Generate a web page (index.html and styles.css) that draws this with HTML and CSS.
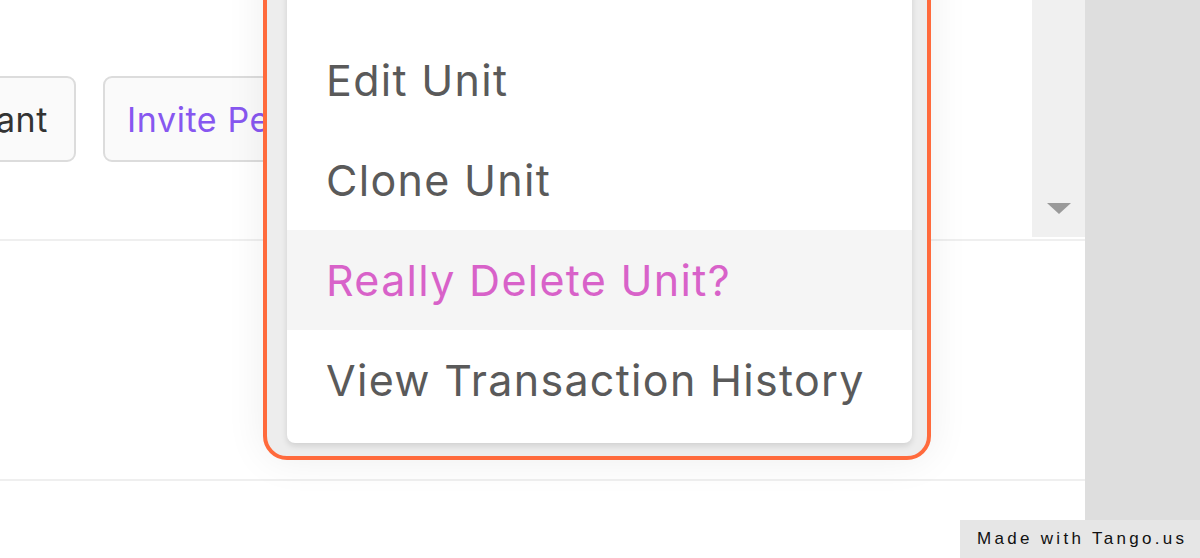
FILE: index.html
```html
<!DOCTYPE html>
<html>
<head>
<meta charset="utf-8">
<link rel="stylesheet" href="styles.css">
</head>
<body>
<div class="screen">
  <div class="page">
    <div class="toolbar">
      <div class="buttons">
        <button class="btn btn-left">Add Tenant</button>
        <button class="btn btn-invite">Invite People</button>
      </div>
      <div class="gutter"><span class="tri"></span></div>
    </div>
    <div class="row"></div>
    <div class="row row-last"></div>

    <div class="focus">
      <ul class="menu">
        <li class="item">Edit Unit</li>
        <li class="item">Clone Unit</li>
        <li class="item item-danger">Really Delete Unit?</li>
        <li class="item">View Transaction History</li>
      </ul>
    </div>
  </div>
  <div class="side"></div>
  <div class="tango">Made with Tango.us</div>
</div>
</body>
</html>
```
FILE: styles.css
```css
* { box-sizing: border-box; }
html, body { margin: 0; padding: 0; }
body { width: 1200px; height: 558px; overflow: hidden; background: #fff; font-family: Inter, "Noto Sans", sans-serif; }

.screen { position: relative; display: flex; width: 1200px; height: 558px; overflow: hidden; }
.page { position: relative; width: 1085px; height: 558px; background: #fff; display: flex; flex-direction: column; overflow: hidden; }
.side { width: 115px; height: 558px; background: #dedede; }

.toolbar { display: flex; height: 241px; flex-shrink: 0; border-bottom: 2px solid #efefef; }
.buttons { flex: 1; display: flex; gap: 27px; padding-top: 76px; margin-left: -184px; overflow: hidden; }
.btn {
  height: 86px; padding: 0 25px; border: 2px solid #dcdcdc; border-radius: 9px;
  background: #fafafa; font-family: Inter, sans-serif; font-size: 34px; white-space: nowrap;
  color: #333; letter-spacing: 0.6px; flex-shrink: 0;
}
.btn-left { width: 260px; text-align: right; padding-right: 26px; }
.btn-invite { color: #8757f0; padding-left: 22px; }
.gutter { width: 53px; height: 237px; background: #f0f0f0; display: flex; justify-content: center; padding-top: 203px; flex-shrink: 0; }
.tri { width: 0; height: 0; border-left: 12px solid transparent; border-right: 12px solid transparent; border-top: 11px solid #9a9a9a; }

.row { height: 240px; flex-shrink: 0; border-bottom: 2px solid #efefef; }
.row-last { flex: 1; height: auto; border-bottom: none; }

.focus {
  position: absolute; left: 263px; top: -60px; width: 668px; height: 520px;
  border: 4px solid #ff6a3c; border-radius: 24px;
  padding: 0 15px 13px 20px;
  background: #ededed;
  box-shadow: 0 0 40px rgba(0,0,0,0.07);
  display: flex; flex-direction: column; justify-content: flex-end;
}
.menu {
  list-style: none; margin: 0; padding: 0 0 13px 0;
  background: #fff; border-radius: 0 0 8px 8px;
  box-shadow: 0 3px 6px rgba(0,0,0,0.12);
  height: 503px; display: flex; flex-direction: column; justify-content: flex-end;
}
.item {
  height: 100px; display: flex; align-items: center; padding-left: 39px;
  font-size: 43px; color: #5a5a5a; letter-spacing: 1.3px;
}
.item-danger { background: #f5f5f5; color: #d862c9; }

.tango {
  position: absolute; right: 0; bottom: 0; width: 240px; height: 38px;
  background: #e6e6e6; color: #111;
  font-family: "Liberation Sans", Arial, sans-serif; font-size: 17px; letter-spacing: 3.3px;
  display: flex; align-items: center; padding-left: 17px;
}
```
